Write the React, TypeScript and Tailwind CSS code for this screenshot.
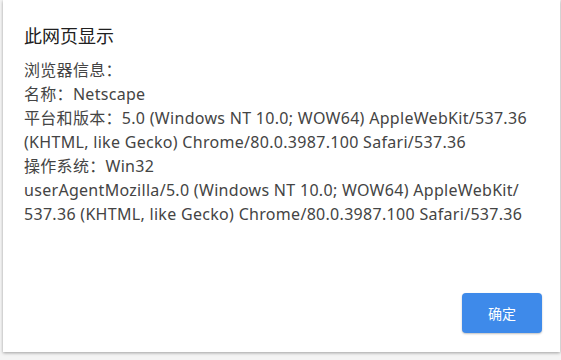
export default function App() {
  const lines = [
    '浏览器信息：',
    '名称：Netscape',
    '平台和版本：5.0 (Windows NT 10.0; WOW64) AppleWebKit/537.36',
    '(KHTML, like Gecko) Chrome/80.0.3987.100 Safari/537.36',
    '操作系统：Win32',
    'userAgentMozilla/5.0 (Windows NT 10.0; WOW64) AppleWebKit/',
    '537.36 (KHTML, like Gecko) Chrome/80.0.3987.100 Safari/537.36',
  ];

  return (
    <div
      className="w-[561px] h-[360px] bg-[#f4f4f4] overflow-hidden"
      style={{ fontFamily: '"Noto Sans", "Noto Sans CJK SC", sans-serif' }}
    >
      <div className="ml-[3px] w-[557px] h-[352px] bg-white shadow-[0_1px_3px_rgba(0,0,0,0.35)] flex flex-col pl-[21px] pr-[18px]">
        <div className="pt-[23px] text-[18px] leading-[26px] text-[#202020]">此网页显示</div>
        <div className="mt-[9px] text-[16px] leading-[24px] text-[#444] tracking-[0.3px]">
          {lines.map((l, i) => (
            <div key={i} className="whitespace-nowrap">{l}</div>
          ))}
        </div>
        <div className="flex-1" />
        <div className="flex justify-end pb-[19px]">
          <button className="w-[80px] h-[40px] rounded-[4px] bg-[#3e8aea] text-white text-[14px] shadow-[0_1px_2px_rgba(0,0,0,0.25)]">
            确定
          </button>
        </div>
      </div>
    </div>
  );
}
